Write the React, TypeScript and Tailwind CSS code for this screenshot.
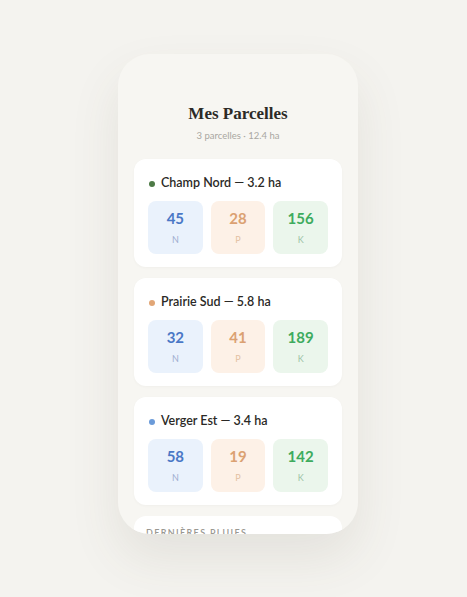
const parcels = [
  { name: "Champ Nord", area: "3.2", dot: "bg-[#4d7a46]", n: 45, p: 28, k: 156 },
  { name: "Prairie Sud", area: "5.8", dot: "bg-[#e1a676]", n: 32, p: 41, k: 189 },
  { name: "Verger Est", area: "3.4", dot: "bg-[#6b9bd9]", n: 58, p: 19, k: 142 },
];

function Nutrient({ value, label, box, num, lab }: { value: number; label: string; box: string; num: string; lab: string }) {
  return (
    <div className={`flex h-[53px] flex-col items-center justify-center rounded-[8px] ${box}`}>
      <span className={`text-[15px] font-bold leading-none ${num}`}>{value}</span>
      <span className={`mt-[9px] text-[9px] leading-none ${lab}`}>{label}</span>
    </div>
  );
}

export default function App() {
  return (
    <div
      className="flex min-h-screen justify-center bg-[#f4f3ef] pl-[9px] pt-[54px]"
      style={{ fontFamily: "Lato, 'Open Sans', sans-serif" }}
    >
      <div className="h-[480px] w-[240px] overflow-hidden rounded-[32px] bg-[#f7f6f2] px-4 shadow-[0_24px_50px_rgba(90,80,60,0.10)]">
        <div className="pt-[51px] text-center">
          <h1
            className="text-[17px] font-semibold leading-none text-[#2b2a26]"
            style={{ fontFamily: "'Liberation Serif', serif" }}
          >
            Mes Parcelles
          </h1>
          <p className="mt-[9px] text-[9.5px] leading-none text-[#a9a7a1]">3 parcelles · 12.4 ha</p>
        </div>

        <div className="mt-[18px] flex flex-col gap-[11px]">
          {parcels.map((p) => (
            <div key={p.name} className="h-[108px] rounded-[12px] bg-white px-[14px] pt-[17px] shadow-[0_1px_3px_rgba(0,0,0,0.03)]">
              <div className="flex h-4 items-center gap-[6px] pl-[1px]">
                <span className={`h-[6px] w-[6px] rounded-full ${p.dot}`} />
                <span className="text-[12.5px] font-semibold text-[#2a2926]">
                  {p.name} — {p.area} ha
                </span>
              </div>
              <div className="mt-[9px] grid grid-cols-3 gap-2">
                <Nutrient value={p.n} label="N" box="bg-[#eaf2fc]" num="text-[#4a78c6]" lab="text-[#9eaed0]" />
                <Nutrient value={p.p} label="P" box="bg-[#fdf1e7]" num="text-[#dba172]" lab="text-[#e3c0a2]" />
                <Nutrient value={p.k} label="K" box="bg-[#ebf6ec]" num="text-[#3eab5e]" lab="text-[#9cc3a6]" />
              </div>
            </div>
          ))}
          <div className="h-[60px] rounded-[12px] bg-white px-[12px] pt-[12px]">
            <p className="text-[9px] font-semibold uppercase leading-none tracking-[0.15em] text-[#9a9892]">Dernières pluies</p>
          </div>
        </div>
      </div>
    </div>
  );
}
